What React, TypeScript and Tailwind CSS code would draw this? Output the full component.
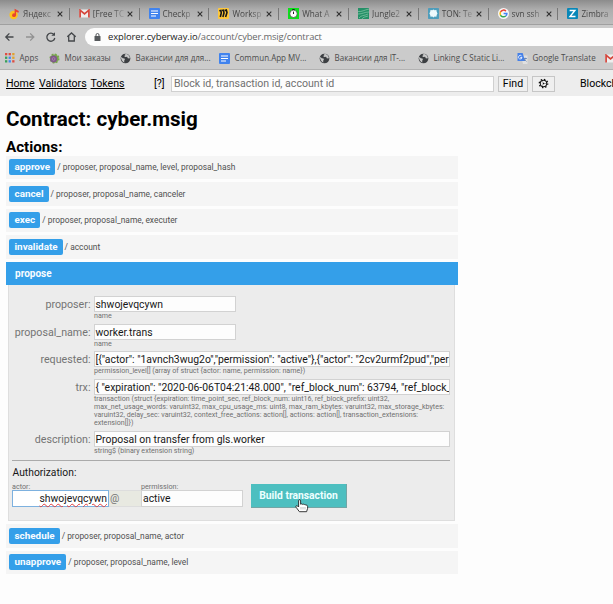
import type { ReactNode } from "react";

const openSans = "font-['Open_Sans','Noto_Sans',sans-serif]";
const roboto = "font-[Roboto,'Liberation_Sans',sans-serif]";

function DocIcon() {
  return (
    <svg viewBox="0 0 11 11" className="size-[11px] shrink-0">
      <rect width="11" height="11" rx="1" fill="#4083ee" />
      <path d="M2 3h7M2 5.5h7M2 8h5" stroke="#fff" strokeWidth="1.1" />
    </svg>
  );
}

function GlobeIcon() {
  return (
    <svg viewBox="0 0 12 12" className="size-[11px] shrink-0">
      <circle cx="6" cy="6" r="5.3" fill="#3c3f42" />
      <path d="M1.4 4.2 3 5.6l2 .5.3 1.3-.8 1 .3 2-1.6-.8L2 8 1.2 6zM5 1.3l1 .8-1.4 1.2.9 1L7.8 4l.7 1.7 1.9.4.3-1.8L9 2 7 1z" fill="#c9c9c9" />
    </svg>
  );
}

function GmailIcon() {
  return (
    <svg viewBox="0 0 11 9" className="h-[9px] w-[11px] shrink-0">
      <rect x=".5" y=".5" width="10" height="8" rx=".7" fill="#eee" />
      <path d="M1.1 8.6V1.2L5.5 5l4.4-3.8v7.4" fill="none" stroke="#d5453b" strokeWidth="1.7" />
    </svg>
  );
}

function YandexMusicIcon() {
  return (
    <svg viewBox="0 0 11 12" className="h-[12px] w-[11px] shrink-0">
      <circle cx="4.6" cy="7" r="4.2" fill="#ffc21a" />
      <path d="M5.6 7.2V.8l4.3 2.3-.5 1.6-2.3-.9v3.6" fill="#e8432f" />
      <circle cx="5" cy="7.2" r="1.9" fill="#e8432f" />
    </svg>
  );
}

function BoardIcon() {
  return (
    <svg viewBox="0 0 11 11" className="size-[11px] shrink-0">
      <rect width="11" height="11" rx="1" fill="#ffc83a" />
      <path d="M1.3 2.8 2.9 2.5 3.3 5 2.3 9M4 2.6l1.5-.4.5 2.8-1.1 4M6.8 2.4l1.5-.4.7 2.6L7.6 9" fill="none" stroke="#161616" strokeWidth="1.6" />
    </svg>
  );
}

function UpworkIcon() {
  return (
    <svg viewBox="0 0 11 11" className="size-[11px] shrink-0">
      <rect width="11" height="11" fill="#0be11a" />
      <circle cx="5.5" cy="5.8" r="3.7" fill="#fff" stroke="#444" strokeWidth=".7" />
      <path d="M5.5 6V3.6M4.3 1.5h2.4" stroke="#222" strokeWidth="1" />
    </svg>
  );
}

function JungleIcon() {
  return (
    <svg viewBox="0 0 11 11" className="size-[11px] shrink-0">
      <rect width="11" height="11" fill="#259067" />
      <path d="M0 3.5C4 4 6 2 11 1M0 6c5 0 6-2 11-2M1 10c2-3 5-2 9-4M4 11c1-2 3-2 6-3" fill="none" stroke="#8ac8aa" strokeWidth=".7" />
    </svg>
  );
}

function TonIcon() {
  return (
    <svg viewBox="0 0 11 11" className="size-[11px] shrink-0">
      <rect width="11" height="11" rx=".8" fill="#4e9dbb" />
      <path d="m5.5 1.5 1 .8L8.4 2l.3 1.8.8 1.7-.8 1.5-.3 1.8-1.9-.2-1 .9-1.2-.9-1.8.2-.3-1.8-.8-1.5.8-1.7L2.5 2l1.8.3z" fill="#eef9fc" />
    </svg>
  );
}

function GoogleIcon() {
  return (
    <svg viewBox="0 0 11 11" className="size-[11px] shrink-0">
      <circle cx="5.5" cy="5.5" r="5.5" fill="#f7f7f7" />
      <g fill="none" strokeWidth="1.5">
        <path d="M7.9 3.1A3.4 3.4 0 0 0 2.5 3.9" stroke="#e94335" />
        <path d="M2.5 3.9a3.4 3.4 0 0 0 0 3.2" stroke="#fabb05" />
        <path d="M2.5 7.1a3.4 3.4 0 0 0 5.2.9" stroke="#34a853" />
        <path d="M7.7 8c.8-.6 1.2-1.5 1.2-2.4H5.6" stroke="#4285f4" />
      </g>
    </svg>
  );
}

function ZimbraIcon() {
  return (
    <svg viewBox="0 0 11 11" className="size-[11px] shrink-0">
      <rect width="11" height="11" rx="1" fill="#0787b8" />
      <path d="M2.6 2.5h5.3L3 8.5h5.5" fill="none" stroke="#fff" strokeWidth="1.4" />
    </svg>
  );
}

function AppsIcon() {
  const colors = ["#df4c40", "#df4c40", "#e2a22f", "#38a05a", "#4285f4", "#e2a22f", "#38a05a", "#4285f4", "#df4c40"];
  return (
    <svg viewBox="0 0 10 10" className="size-[10px] shrink-0">
      {colors.map((c, i) => (
        <rect key={i} x={(i % 3) * 3.6} y={Math.floor(i / 3) * 3.6} width="2.3" height="2.3" fill={c} />
      ))}
    </svg>
  );
}

function FlowerIcon() {
  return (
    <svg viewBox="0 0 12 12" className="size-[11px] shrink-0">
      <circle cx="6" cy="6" r="4.5" fill="#78a94b" stroke="#78a94b" strokeWidth="2" strokeDasharray="2 1.5" />
      <circle cx="5" cy="6.5" r="3.8" fill="#80598a" />
      <circle cx="5" cy="6.5" r="1.5" fill="none" stroke="#b08cb5" strokeWidth=".8" />
    </svg>
  );
}

function TranslateIcon() {
  return (
    <svg viewBox="0 0 11 11" className="size-[11px] shrink-0">
      <path d="M4 2.5h6.5V11H6z" fill="#e0e0e0" />
      <path d="M.5 0h5.2l2.3 8H.5z" fill="#4681e8" />
      <path d="M4.6 3A1.8 1.8 0 1 0 5 4.5H3.3" fill="none" stroke="#fff" strokeWidth=".8" />
      <path d="M6.5 5.5h3.5M8.2 4.7v.8c0 1-.6 2-1.2 2.5M7.5 6.5l2 2" fill="none" stroke="#5479b0" strokeWidth=".7" />
    </svg>
  );
}

const tabs: { icon: ReactNode; title: string }[] = [
  { icon: <YandexMusicIcon />, title: "Яндекс" },
  { icon: <GmailIcon />, title: "[Free TC" },
  { icon: <DocIcon />, title: "Checkp" },
  { icon: <BoardIcon />, title: "Worksp" },
  { icon: <UpworkIcon />, title: "What A" },
  { icon: <JungleIcon />, title: "Jungle2" },
  { icon: <TonIcon />, title: "TON: Te" },
  { icon: <GoogleIcon />, title: "svn ssh" },
  { icon: <ZimbraIcon />, title: "Zimbra" },
];

function TabStrip() {
  return (
    <div className="flex h-[25px] w-[630px] items-center border-b border-[#a0a0a0] bg-linear-to-b from-[#8c8c8c] via-[#adadad] via-40% to-[#bdbdbd] pt-[3px]">
      {tabs.map((t) => (
        <div key={t.title} className="flex h-3 w-[69.8px] shrink-0 items-center border-r border-[#777] pl-[9px]">
          {t.icon}
          <span className="ml-[3px] w-[31px] whitespace-nowrap bg-linear-to-r from-[#414141] from-60% to-[#a0a0a0] bg-clip-text text-[8.2px] leading-3 text-transparent">{t.title}</span>
          <svg viewBox="0 0 6 6" className="ml-[3px] size-[6px] shrink-0">
            <path d="m.7.7 4.6 4.6M5.3.7.7 5.3" stroke="#303030" strokeWidth="1.1" />
          </svg>
        </div>
      ))}
    </div>
  );
}

function AddressBar() {
  return (
    <div className="flex h-[23px] items-center">
      <svg viewBox="0 0 80 14" className="ml-1 h-[14px] w-[80px] shrink-0" fill="none" stroke="#45484b" strokeWidth="1.3">
        <path d="M9.5 7H2m3.4-3.6L1.8 7l3.6 3.6" />
        <path d="M22 7h7.5M26.2 3.4 29.8 7l-3.6 3.6" stroke="#929292" />
        <path d="M50 4.7A4 4 0 1 0 50.8 8" />
        <path d="M51 2.2v3.5h-3.7z" fill="#45484b" stroke="none" />
        <path d="M63.3 6.8 67.5 3l4.2 3.8M64.7 6v5h5.6V6" />
      </svg>
      <div className="ml-[1px] flex h-[18px] flex-1 items-center rounded-l-full bg-[#fcfcfc] pl-[9px]">
        <svg viewBox="0 0 7 8" className="h-2 w-[7px]">
          <rect x=".5" y="3" width="6" height="5" rx=".6" fill="#55585b" />
          <path d="M2 3.4V2a1.5 1.5 0 0 1 3 0v1.4" fill="none" stroke="#55585b" />
        </svg>
        <span className="ml-[7px] whitespace-nowrap text-[9.4px] leading-[18px] tracking-[-0.07px] text-[#222]">
          explorer.cyberway.io<span className="tracking-[-0.14px] text-[#686868]">/account/cyber.msig/contract</span>
        </span>
      </div>
    </div>
  );
}

const bookmarks = [
  { icon: <AppsIcon />, label: "Apps", box: "w-[44px]" },
  { icon: <FlowerIcon />, label: "Мои заказы", box: "w-[71px]" },
  { icon: <GlobeIcon />, label: "Вакансии для для...", box: "w-[99px]" },
  { icon: <DocIcon />, label: "Commun.App MV...", box: "w-[100px]" },
  { icon: <GlobeIcon />, label: "Вакансии для IT-...", box: "w-[99px]" },
  { icon: <GlobeIcon />, label: "Linking C Static Li...", box: "w-[99px]" },
  { icon: <TranslateIcon />, label: "Google Translate", box: "w-[88px]" },
  { icon: <GmailIcon />, label: "", box: "w-[12px]" },
];

function BookmarkBar() {
  return (
    <div className="flex h-[22px] w-[630px] items-center border-b border-[#b2b2b2] pb-px pl-[5px]">
      {bookmarks.map((b, i) => (
        <div key={i} className={`flex shrink-0 items-center gap-[4.5px] ${b.box}`}>
          {b.icon}
          <span className="whitespace-nowrap text-[8.02px] leading-3 text-[#4c4c4c]">{b.label}</span>
        </div>
      ))}
    </div>
  );
}

function SiteHeader() {
  return (
    <div className="flex h-[26px] w-[640px] items-center bg-[#ededed] pt-px pl-[6px] text-[10.6px] leading-[15px] text-black *:shrink-0">
      <a className="w-[33px] underline">Home</a>
      <a className="w-[51.5px] underline">Validators</a>
      <a className="w-[63.5px] underline">Tokens</a>
      <span className="w-[17px]">[?]</span>
      <div className="h-4 w-[323px] border border-[#d0d0d0] bg-[#fdfdfd] pl-[2px] leading-[14px] text-[#707070]">Block id, transaction id, account id</div>
      <button className="ml-[4px] h-4 w-[30px] border border-[#c6c6c6] bg-[#efefef] leading-[14px]">Find</button>
      <button className="ml-[4px] flex h-4 w-[23px] items-center justify-center border border-[#c6c6c6] bg-[#efefef]">
        <svg viewBox="-6 -6 12 12" className="size-[11px]" fill="none" stroke="#111">
          <circle r="3.5" strokeWidth="1.1" />
          <circle r="4.6" strokeWidth="1.4" strokeDasharray="1.5 2.11" />
          <circle r=".8" fill="#111" stroke="none" />
          <path d="M0 0h3M0 0l-1.5 2.6M0 0l-1.5-2.6" strokeWidth=".4" />
        </svg>
      </button>
      <span className="ml-[25px] whitespace-nowrap">Blockch</span>
    </div>
  );
}

function ActionRow({ name, args }: { name: string; args: string }) {
  return (
    <div className="mb-[3px] flex h-[23.5px] items-center bg-[#f5f5f5] pl-[3px]">
      <span className="h-4 rounded-[2px] bg-[#349fe9] pr-[5px] pl-[5.5px] text-[9.9px] leading-4 font-bold text-[#f8fcff]">{name}</span>
      <span className="ml-[2px] text-[8.4px] leading-4 text-[#505050]">/ {args}</span>
    </div>
  );
}

function Field({ label, value, hint, wide, box }: { label: string; value: string; hint: ReactNode; wide?: boolean; box: string }) {
  return (
    <div className={`flex ${box}`}>
      <span className="w-[81.5px] text-right text-[10.7px] leading-[17px] text-[#747474]">{label}:</span>
      <div className="ml-[3.5px]">
        <div className={`h-4 overflow-hidden whitespace-nowrap border border-[#d2d2d2] bg-[#fdfdfd] pl-[0.5px] text-[10.4px] leading-[15px] text-[#171717] ${wide ? "w-[356px]" : "w-[142px]"}`}>{value}</div>
        <div className="whitespace-nowrap text-[7.12px] leading-[8px] text-[#707070]">{hint}</div>
      </div>
    </div>
  );
}

function Pointer() {
  return (
    <svg viewBox="0 0 14 14" className="absolute top-[15px] left-[44px] size-[14px]">
      <path d="M3.6 1.8c0-1.5 2-1.5 2 0v3.4c.5-.5 1.5-.4 1.8.2.5-.5 1.5-.3 1.8.3.6-.4 1.5-.1 1.7.5 1-.3 1.7.2 1.7 1.1v2l-1 3.4H4.4L1.2 8.4C.3 7 1.6 6.2 2.6 7l1 1z" fill="#fff" stroke="#222" strokeWidth=".9" />
      <path d="M6 8v2.5M8 8v2.5M10 8v2.5" stroke="#999" strokeWidth=".6" />
    </svg>
  );
}

function ProposePanel() {
  return (
    <div className="mb-[3px] ml-[2px] h-[236px] w-[447px] border border-t-0 border-[#dedede] bg-[#ececec] pt-[11px]">
      <Field label="proposer" value="shwojevqcywn" hint="name" box="h-[28px]" />
      <Field label="proposal_name" value="worker.trans" hint="name" box="h-[27px]" />
      <Field label="requested" wide value={'[{"actor": "1avnch3wug2o","permission": "active"},{"actor": "2cv2urmf2pud","permission": "active"}'} hint="permission_level[] (array of struct {actor: name, permission: name})" box="h-[28px]" />
      <Field
        label="trx"
        wide
        value={'{ "expiration": "2020-06-06T04:21:48.000", "ref_block_num": 63794, "ref_block_prefix": 0'}
        hint={
          <>
            transaction (struct {"{"}expiration: time_point_sec, ref_block_num: uint16, ref_block_prefix: uint32,<br />
            max_net_usage_words: varuint32, max_cpu_usage_ms: uint8, max_ram_kbytes: varuint32, max_storage_kbytes:<br />
            varuint32, delay_sec: varuint32, context_free_actions: action[], actions: action[], transaction_extensions:<br />
            extension[]{"}"})
          </>
        }
        box="h-[51.5px]"
      />
      <Field label="description" wide value="Proposal on transfer from gls.worker" hint="string$ (binary extension string)" box="h-[29px]" />
      <div className="ml-[3px] w-[438px] border-t border-[#aaa]">
        <div className="flex">
          <div className="w-[239px]">
            <div className="mt-[5px] pl-[0.5px] text-[10.3px] leading-[14px] text-[#171717]">Authorization:</div>
            <div className="mt-[3px] flex text-[7.2px] leading-[7px] text-[#707070]">
              <span className="w-[129px]">actor:</span>
              <span>permission:</span>
            </div>
            <div className="flex h-[17px] text-[10.4px] leading-[15px]">
              <div className="w-[97px] border border-[#7db1df] bg-white pr-[1px] text-right text-[#171717]">
                <span className="underline decoration-[#df4040] decoration-wavy decoration-[0.5px] underline-offset-[1px]">shwojevqcywn</span>
              </div>
              <div className="w-[32px] border-y border-[#ddd] bg-[#e8e9e1] pl-[1px] text-[#747474]">@</div>
              <div className="w-[102px] border border-[#d2d2d2] bg-[#fdfdfd] pl-[1px] text-[#171717]">active</div>
            </div>
          </div>
          <div className="relative mt-[23px] h-6 w-[96px] border-r border-b border-[#73a5a5] bg-[#4dbfc0] text-center text-[10.3px] leading-[23px] font-bold text-[#edffff]">
            Build transaction
            <Pointer />
          </div>
        </div>
      </div>
    </div>
  );
}

export default function App() {
  return (
    <div className="h-[604px] w-[613px] overflow-hidden bg-[#fdfdfd]">
      <div className={`h-[70px] overflow-hidden bg-[#cbcbcb] ${openSans}`}>
        <TabStrip />
        <AddressBar />
        <BookmarkBar />
      </div>
      <div className={roboto}>
        <SiteHeader />
        <main className="ml-[6px] w-[452px]">
          <h1 className="pt-[10px] text-[20.6px] leading-[26px] font-bold text-black">Contract: cyber.msig</h1>
          <h2 className="mt-[6px] h-[17.5px] text-[15.2px] leading-[18px] font-bold text-black">Actions:</h2>
          <div>
            <ActionRow name="approve" args="proposer, proposal_name, level, proposal_hash" />
            <ActionRow name="cancel" args="proposer, proposal_name, canceler" />
            <ActionRow name="exec" args="proposer, proposal_name, executer" />
            <ActionRow name="invalidate" args="account" />
            <div className="h-[23.5px] bg-[#349fe9] pl-[9px] text-[10px] leading-6 font-bold text-[#f8fcff]">propose</div>
            <ProposePanel />
            <ActionRow name="schedule" args="proposer, proposal_name, actor" />
            <ActionRow name="unapprove" args="proposer, proposal_name, level" />
          </div>
        </main>
      </div>
    </div>
  );
}
